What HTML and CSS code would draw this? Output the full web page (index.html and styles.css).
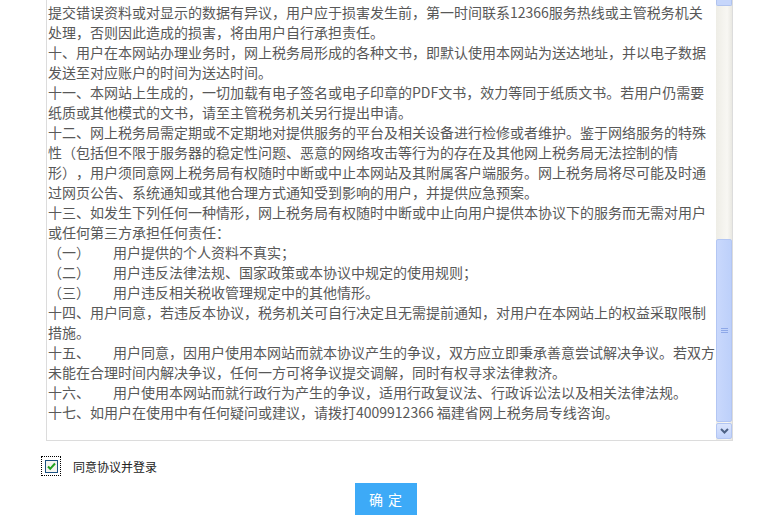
FILE: index.html
```html
<!DOCTYPE html>
<html lang="zh-CN">
<head>
    <meta charset="UTF-8">
    <title>用户协议</title>
    <link rel="stylesheet" href="styles.css">
</head>
<body>
    <div class="page">
        <div class="agreement">
            <div class="agreement-text">
                <p>提交错误资料或对显示的数据有异议，用户应于损害发生前，第一时间联系12366服务热线或主管税务机关处理，否则因此造成的损害，将由用户自行承担责任。</p>
                <p>十、用户在本网站办理业务时，网上税务局形成的各种文书，即默认使用本网站为送达地址，并以电子数据发送至对应账户的时间为送达时间。</p>
                <p>十一、本网站上生成的，一切加载有电子签名或电子印章的PDF文书，效力等同于纸质文书。若用户仍需要纸质或其他模式的文书，请至主管税务机关另行提出申请。</p>
                <p>十二、网上税务局需定期或不定期地对提供服务的平台及相关设备进行检修或者维护。鉴于网络服务的特殊性（包括但不限于服务器的稳定性问题、恶意的网络攻击等行为的存在及其他网上税务局无法控制的情形），用户须同意网上税务局有权随时中断或中止本网站及其附属客户端服务。网上税务局将尽可能及时通过网页公告、系统通知或其他合理方式通知受到影响的用户，并提供应急预案。</p>
                <p>十三、如发生下列任何一种情形，网上税务局有权随时中断或中止向用户提供本协议下的服务而无需对用户或任何第三方承担任何责任：</p>
                <p><span class="num">（一）</span>用户提供的个人资料不真实；</p>
                <p><span class="num">（二）</span>用户违反法律法规、国家政策或本协议中规定的使用规则；</p>
                <p><span class="num">（三）</span>用户违反相关税收管理规定中的其他情形。</p>
                <p>十四、用户同意，若违反本协议，税务机关可自行决定且无需提前通知，对用户在本网站上的权益采取限制措施。</p>
                <p><span class="num">十五、</span>用户同意，因用户使用本网站而就本协议产生的争议，双方应立即秉承善意尝试解决争议。若双方未能在合理时间内解决争议，任何一方可将争议提交调解，同时有权寻求法律救济。</p>
                <p><span class="num">十六、</span>用户使用本网站而就行政行为产生的争议，适用行政复议法、行政诉讼法以及相关法律法规。</p>
                <p>十七、如用户在使用中有任何疑问或建议，请拨打4009912366 福建省网上税务局专线咨询。</p>
            </div>
            <div class="scrollbar">
                <div class="sb-up"></div>
                <div class="sb-track"></div>
                <div class="sb-thumb">
                    <svg width="7" height="6" viewBox="0 0 7 6"><path d="M0 0.5h7M0 2.5h7M0 4.5h7" stroke="#8ea8e8" stroke-width="1"/></svg>
                </div>
                <div class="sb-down">
                    <svg width="9" height="6" viewBox="0 0 9 6"><path d="M1 1l3.5 3.5L8 1" fill="none" stroke="#4d6185" stroke-width="2"/></svg>
                </div>
            </div>
        </div>

        <label class="agree">
            <span class="check-focus">
                <span class="check-box">
                    <svg width="9" height="9" viewBox="0 0 9 9"><path d="M1 4.5l2.2 2.3L8 1.5" fill="none" stroke="#21a121" stroke-width="2"/></svg>
                </span>
            </span>
            同意协议并登录
        </label>

        <div class="actions">
            <button class="btn-ok">确 定</button>
        </div>
    </div>
</body>
</html>
```

FILE: styles.css
```css
body {
    margin: 0;
    background: #fff;
    font-family: "Noto Sans CJK SC", "Noto Sans", sans-serif;
    text-spacing-trim: space-all;
}
.page {
    padding-left: 46px;
}
.agreement {
    display: flex;
    width: 685px;
    height: 440px;
    border: 1px solid #dcdcdc;
    border-top: 0;
}
.agreement-text {
    width: 668px;
    padding: 2px 0 0 1px;
    font-size: 14px;
    line-height: 20px;
    color: #585858;
    overflow: hidden;
}
.agreement-text p {
    margin: 0;
}
.num {
    display: inline-block;
    width: 42px;
    margin-right: 23px;
}
.scrollbar {
    width: 16px;
    display: flex;
    flex-direction: column;
    background: linear-gradient(to right, #eeede6, #f8f7f3 70%, #e9e8e2);
}
.sb-up {
    height: 5px;
    border: 1px solid #b0c3ee;
    border-top: 0;
    border-radius: 0 0 2px 2px;
    background: #c6d6fb;
}
.sb-track {
    height: 233px;
}
.sb-thumb {
    height: 181px;
    border: 1px solid #b3c6f3;
    border-radius: 2px;
    background: linear-gradient(to right, #c9d8fc, #bdd0fa);
    display: flex;
    align-items: center;
    justify-content: center;
}
.sb-down {
    height: 14px;
    margin-top: 1px;
    border: 1px solid #b3c6f3;
    border-radius: 2px;
    background: linear-gradient(to bottom, #dbe5fd, #c2d3fb);
    display: flex;
    align-items: center;
    justify-content: center;
}
.agree {
    display: flex;
    align-items: center;
    margin: 15px 0 0 -5px;
    font-size: 12px;
    color: #222;
}
.check-focus {
    width: 18px;
    height: 18px;
    border: 1px dotted #000;
    display: flex;
    align-items: center;
    justify-content: center;
    margin-right: 12px;
}
.check-box {
    width: 11px;
    height: 11px;
    border: 1px solid #1c5180;
    background: #f4f4f0;
    display: flex;
    align-items: center;
    justify-content: center;
}
.actions {
    margin: 7px 0 0 309px;
}
.btn-ok {
    width: 62px;
    height: 32px;
    border: none;
    background: #3daaf7;
    color: #fff;
    font-family: "Noto Sans CJK SC", sans-serif;
    font-size: 14px;
    letter-spacing: 1px;
    cursor: pointer;
}
```
